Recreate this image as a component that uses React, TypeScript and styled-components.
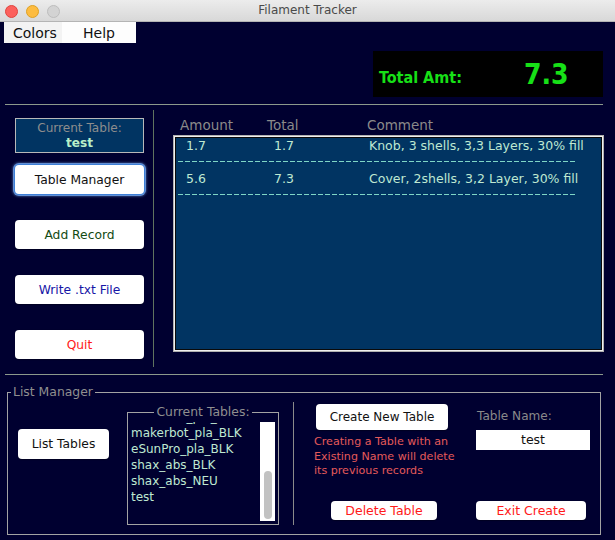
import React from "react";
import styled, { createGlobalStyle } from "styled-components";

const FONT = `"DejaVu Sans", "Liberation Sans", sans-serif`;

const Global = createGlobalStyle`
  html, body { margin: 0; padding: 0; background: #000030; }
  body { font-family: ${FONT}; }
  #root { width: 615px; height: 540px; }
`;

const Window = styled.div`
  width: 615px;
  height: 540px;
  display: flex;
  flex-direction: column;
  overflow: hidden;
  font-family: ${FONT};
`;

const TitleBar = styled.div`
  height: 21px;
  border-bottom: 1px solid #b4b4b4;
  background: linear-gradient(#ececec, #d8d8d8);
  display: flex;
  align-items: center;
  position: relative;
`;

const Lights = styled.div`
  display: flex;
  gap: 8px;
  padding-left: 5px;
  padding-top: 2px;
`;

const Light = styled.span<{ $c: string; $b: string }>`
  width: 11px;
  height: 11px;
  border-radius: 50%;
  background: ${(p) => p.$c};
  border: 0.5px solid ${(p) => p.$b};
`;

const Title = styled.div`
  position: absolute;
  left: 0;
  right: 0;
  top: 0;
  line-height: 21px;
  text-align: center;
  font-size: 12px;
  color: #4a4a4a;
  pointer-events: none;
`;

const Body = styled.div`
  flex: 1;
  background: #000030;
  display: flex;
  flex-direction: column;
`;

const TopArea = styled.div`
  height: 82px;
  display: flex;
  justify-content: space-between;
  align-items: flex-start;
  padding: 0 12px 0 4px;
`;

const MenuBar = styled.div`
  width: 132px;
  height: 21px;
  background: #fdfdfd;
  display: flex;
  align-items: center;
  font-size: 14px;
  color: #111;
`;

const MenuItem = styled.div<{ $w: number; $active?: boolean }>`
  width: ${(p) => p.$w}px;
  height: 100%;
  display: flex;
  align-items: center;
  box-sizing: border-box;
  padding-left: ${(p) => (p.$active ? 9 : 21)}px;
  background: ${(p) => (p.$active ? "#f3f3f3" : "transparent")};
`;

const TotalBox = styled.div`
  margin-top: 29px;
  width: 230px;
  height: 46px;
  background: #000;
  display: flex;
  align-items: center;
  box-sizing: border-box;
  padding-left: 6px;
  color: #17e017;
  font-family: "DejaVu Sans Condensed", "Open Sans", sans-serif;
  font-weight: bold;
`;

const TotalLabel = styled.span`
  font-size: 16px;
  margin-top: 6px;
  width: 145px;
`;

const TotalValue = styled.span`
  font-size: 28px;
  margin-top: 0px;
`;

const Rule = styled.div`
  height: 1px;
  margin: 0 12px 0 5px;
  background: #8c998c;
  flex-shrink: 0;
`;

const Middle = styled.div`
  height: 269px;
  display: flex;
`;

const LeftCol = styled.div`
  margin-left: 15px;
  width: 129px;
  padding-top: 13px;
  display: flex;
  flex-direction: column;
`;

const CurrentBox = styled.div`
  height: 35px;
  box-sizing: border-box;
  border: 1px solid #b8b8b8;
  background: #013462;
  display: flex;
  flex-direction: column;
  align-items: center;
  justify-content: center;
  font-size: 12.1px;
  line-height: 15px;
  margin-bottom: 12px;
`;

const CurrentLabel = styled.span`
  color: #8d8d8d;
`;

const CurrentValue = styled.span`
  color: #b9f0c9;
  font-weight: bold;
`;

const ButtonStack = styled.div`
  display: flex;
  flex-direction: column;
  gap: 26px;
`;

const Btn = styled.button<{ $color?: string; $focus?: boolean; $w?: number; $h?: number; $fs?: number }>`
  width: ${(p) => (p.$w ? `${p.$w}px` : "100%")};
  height: ${(p) => p.$h ?? 29}px;
  background: #fff;
  border: none;
  border-radius: 4px;
  padding: 0;
  font-family: ${FONT};
  font-size: ${(p) => p.$fs ?? 12.3}px;
  color: ${(p) => p.$color ?? "#111"};
  box-shadow: ${(p) =>
    p.$focus
      ? "0 0 0 1px #3e7fd6, 0 0 0 2px rgba(110,160,230,0.85), 0 0 2px 3px rgba(110,160,230,0.35)"
      : "0 0.5px 1px rgba(0,0,0,0.3)"};
  flex-shrink: 0;
`;

const VDivider = styled.div<{ $h: number; $mt: number; $ml: number; $c: string }>`
  width: 1px;
  height: ${(p) => p.$h}px;
  margin-top: ${(p) => p.$mt}px;
  margin-left: ${(p) => p.$ml}px;
  background: ${(p) => p.$c};
  flex-shrink: 0;
`;

const RightPanel = styled.div`
  margin-left: 19px;
  width: 431px;
  padding-top: 12px;
  display: flex;
  flex-direction: column;
`;

const HeaderRow = styled.div`
  display: grid;
  grid-template-columns: 87px 100px 1fr;
  padding-left: 7px;
  height: 18px;
  line-height: 16px;
  font-size: 13.5px;
  color: #8a8a8a;
`;

const TableBox = styled.div`
  height: 217px;
  box-sizing: border-box;
  border: 1px solid #b0b0b0;
  box-shadow: inset 0 0 0 1px #f0f0f0, inset 0 0 0 2px #0a0a0a;
  background: #013462;
  padding: 2px 0 0 3px;
`;

const DataRow = styled.div`
  height: 33px;
  display: flex;
  flex-direction: column;
`;

const DataCells = styled.div`
  display: grid;
  grid-template-columns: 88px 95px 1fr;
  padding-left: 9px;
  height: 16px;
  line-height: 16px;
  font-size: 12.5px;
  color: #bfe9d2;
  white-space: nowrap;
`;

const Dashes = styled.div`
  margin: 7px 0 0 1px;
  width: 398px;
  height: 1px;
  background: repeating-linear-gradient(90deg, #7fd6c6 0 5px, transparent 5px 7px);
`;

const ListManager = styled.fieldset`
  margin: 9px 0 0 7px;
  width: 594px;
  height: 151px;
  box-sizing: border-box;
  padding: 0;
  border: 1px solid #a3a3a3;
  display: flex;
  align-items: flex-start;
  min-width: 0;
`;

const Legend = styled.legend<{ $center?: boolean }>`
  font-size: 12.4px;
  line-height: 16px;
  color: #8f8f8f;
  padding: 0 2px;
  margin-left: ${(p) => (p.$center ? "auto" : "3px")};
  margin-right: ${(p) => (p.$center ? "auto" : "0")};
`;

const ManagerRow = styled.div`
  display: flex;
  align-items: flex-start;
  padding-left: 10px;
  height: 134px;
`;

const TablesSet = styled.fieldset`
  margin: 4px 0 0 18px;
  width: 152px;
  height: 121px;
  box-sizing: border-box;
  padding: 2px 3px 0 3px;
  border: 1px solid #a3a3a3;
  min-width: 0;
  display: flex;
  align-items: flex-start;
`;

const ListViewport = styled.div`
  height: 99px;
  overflow: hidden;
  display: flex;
  flex: 1;
`;

const ListItems = styled.div`
  flex: 1;
  margin-top: -13px;
  font-size: 12px;
  line-height: 16px;
  color: #bfe9d2;
  white-space: nowrap;
`;

const Scrollbar = styled.div`
  width: 15px;
  height: 99px;
  background: #fff;
  position: relative;
  flex-shrink: 0;
`;

const Thumb = styled.div`
  position: absolute;
  left: 4px;
  width: 8px;
  top: 49px;
  height: 48px;
  border-radius: 4px;
  background: #c2c2c2;
`;

const CreateCol = styled.div`
  margin-left: 20px;
  width: 162px;
  height: 120px;
  display: flex;
  flex-direction: column;
  align-items: flex-start;
`;

const Warning = styled.div`
  margin-top: 5px;
  font-size: 11.1px;
  line-height: 14.5px;
  color: #e45a5a;
`;

const NameCol = styled.div`
  width: 115px;
  height: 120px;
  display: flex;
  flex-direction: column;
  align-items: flex-start;
`;

const NameLabel = styled.div`
  margin: 9px 0 0 1px;
  font-size: 12.1px;
  line-height: 14px;
  color: #8a8a8a;
`;

const NameInput = styled.div`
  margin-top: 7px;
  width: 114px;
  height: 20px;
  background: #fff;
  text-align: center;
  font-size: 12.5px;
  line-height: 20px;
  color: #111;
`;

const Push = styled.div`
  margin-top: auto;
  margin-left: ${(p: { $ml?: number }) => p.$ml ?? 0}px;
`;

export default function App() {
  const rows = [
    ["1.7", "1.7", "Knob, 3 shells, 3,3 Layers, 30% fill"],
    ["5.6", "7.3", "Cover, 2shells, 3,2 Layer, 30% fill"],
  ];
  const tables = ["hatchbox_pla_BLK", "makerbot_pla_BLK", "eSunPro_pla_BLK", "shax_abs_BLK", "shax_abs_NEU", "test"];
  return (
    <>
      <Global />
      <Window>
        <TitleBar>
          <Lights>
            <Light $c="#fc605c" $b="#e0443e" />
            <Light $c="#fdbc40" $b="#dea123" />
            <Light $c="#d3d3d3" $b="#bdbdbd" />
          </Lights>
          <Title>Filament Tracker</Title>
        </TitleBar>
        <Body>
          <TopArea>
            <MenuBar>
              <MenuItem $w={58} $active>Colors</MenuItem>
              <MenuItem $w={74} style={{ paddingLeft: 21 }}>Help</MenuItem>
            </MenuBar>
            <TotalBox>
              <TotalLabel>Total Amt:</TotalLabel>
              <TotalValue>7.3</TotalValue>
            </TotalBox>
          </TopArea>
          <Rule />
          <Middle>
            <LeftCol>
              <CurrentBox>
                <CurrentLabel>Current Table:</CurrentLabel>
                <CurrentValue>test</CurrentValue>
              </CurrentBox>
              <ButtonStack>
                <Btn $focus>Table Manager</Btn>
                <Btn $color="#134a13">Add Record</Btn>
                <Btn $color="#1616a6">Write .txt File</Btn>
                <Btn $color="#ff1a1a">Quit</Btn>
              </ButtonStack>
            </LeftCol>
            <VDivider $h={257} $mt={5} $ml={9} $c="#5f735f" />
            <RightPanel>
              <HeaderRow>
                <span>Amount</span>
                <span>Total</span>
                <span>Comment</span>
              </HeaderRow>
              <TableBox>
                {rows.map((r, i) => (
                  <DataRow key={i}>
                    <DataCells>
                      <span>{r[0]}</span>
                      <span>{r[1]}</span>
                      <span>{r[2]}</span>
                    </DataCells>
                    <Dashes />
                  </DataRow>
                ))}
              </TableBox>
            </RightPanel>
          </Middle>
          <Rule />
          <ListManager>
            <Legend>List Manager</Legend>
            <ManagerRow>
              <Btn $w={91} $h={30} style={{ marginTop: 29 }}>List Tables</Btn>
              <TablesSet>
                <Legend $center>Current Tables:</Legend>
                <ListViewport>
                  <ListItems>
                    {tables.map((t) => (
                      <div key={t}>{t}</div>
                    ))}
                  </ListItems>
                  <Scrollbar>
                    <Thumb />
                  </Scrollbar>
                </ListViewport>
              </TablesSet>
              <VDivider $h={123} $mt={2} $ml={14} $c="#8a8a8a" />
              <CreateCol>
                <Btn $w={132} $h={26} $fs={12} style={{ marginTop: 4, marginLeft: 2 }}>Create New Table</Btn>
                <Warning>
                  Creating a Table with an
                  <br />
                  Existing Name will delete
                  <br />
                  its previous records
                </Warning>
                <Push $ml={17}>
                  <Btn $w={106} $h={19} $color="#ff1a1a" $fs={12.5}>Delete Table</Btn>
                </Push>
              </CreateCol>
              <NameCol>
                <NameLabel>Table Name:</NameLabel>
                <NameInput>test</NameInput>
                <Push>
                  <Btn $w={110} $h={19} $color="#ff1a1a" $fs={12.5}>Exit Create</Btn>
                </Push>
              </NameCol>
            </ManagerRow>
          </ListManager>
        </Body>
      </Window>
    </>
  );
}
